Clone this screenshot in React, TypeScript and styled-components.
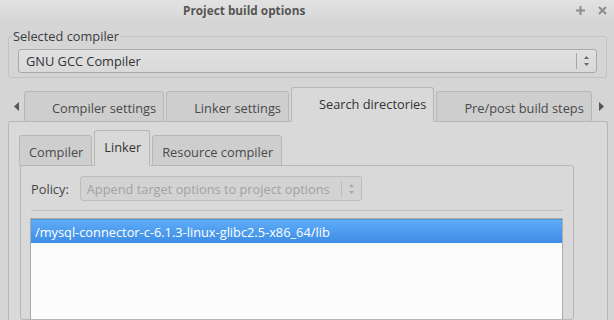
import React from 'react';
import styled, { createGlobalStyle } from 'styled-components';

const GlobalStyle = createGlobalStyle`
  html, body {
    margin: 0;
    padding: 0;
    background: #d5d5d5;
  }
  body {
    font-family: 'Open Sans', 'Noto Sans', sans-serif;
    font-size: 12.8px;
    color: #3c3c3c;
  }
`;

const Window = styled.div`
  width: 614px;
  height: 320px;
  overflow: hidden;
  background: #d5d5d5;
  display: flex;
  flex-direction: column;
`;

const TitleBar = styled.div`
  height: 20px;
  flex: none;
  display: flex;
  align-items: center;
  padding: 0 7px 0 183px;
  background: linear-gradient(#e2e2e2, #d8d8d8);
  .title {
    font-weight: bold;
    font-size: 11.8px;
    color: #555;
    flex: 1;
  }
  .buttons {
    display: flex;
    gap: 13px;
    align-items: center;
  }
`;

const GroupBox = styled.fieldset`
  margin: 7px 7px 0 8px;
  padding: 0 9px 4px;
  border: 1px solid #c2c2c2;
  border-radius: 3px;
  min-width: 0;
  legend {
    padding: 0 1px;
    margin-left: -6px;
    line-height: 18px;
    color: #3c3c3c;
  }
`;

const Combo = styled.div<{ $disabled?: boolean; $width?: number }>`
  box-sizing: border-box;
  height: ${(p) => (p.$disabled ? 25 : 24)}px;
  width: ${(p) => (p.$width ? `${p.$width}px` : 'auto')};
  margin-top: ${(p) => (p.$disabled ? 0 : 4)}px;
  display: flex;
  align-items: center;
  border: 1px solid ${(p) => (p.$disabled ? '#bdbdbd' : '#a9a9a9')};
  border-radius: 3px;
  background: ${(p) => (p.$disabled ? '#d3d3d3' : 'linear-gradient(#e0e0e0, #d9d9d9)')};
  color: ${(p) => (p.$disabled ? '#a2a2a2' : '#333')};
  padding-left: ${(p) => (p.$disabled ? 6 : 7)}px;
  .value {
    flex: 1;
    white-space: nowrap;
  }
  .spin {
    width: 19px;
    height: 16px;
    border-left: 1px solid ${(p) => (p.$disabled ? '#bcbcbc' : '#a6a6a6')};
    display: flex;
    align-items: center;
    justify-content: center;
  }
`;

const TabArea = styled.div`
  margin-top: 9px;
  display: flex;
  flex-direction: column;
  flex: 1;
  min-height: 0;
`;

const TabBar = styled.div`
  display: flex;
  align-items: flex-end;
  height: 35px;
  margin-bottom: -1px;
  position: relative;
  z-index: 1;
`;

const ScrollArrow = styled.div<{ $side: 'left' | 'right' }>`
  width: ${(p) => (p.$side === 'left' ? 24 : 22)}px;
  align-self: stretch;
  display: flex;
  align-items: center;
  justify-content: ${(p) => (p.$side === 'left' ? 'flex-start' : 'flex-end')};
  padding: ${(p) => (p.$side === 'left' ? '0 0 0 14px' : '0 10px 0 0')};
  box-sizing: border-box;
  padding-top: 3px;
`;

const TabRow = styled.div<{ $gap: number }>`
  display: flex;
  align-items: flex-end;
  gap: ${(p) => p.$gap}px;
`;

const Tab = styled.div<{ $active?: boolean; $pad: string; $h: number; $hActive: number }>`
  box-sizing: border-box;
  height: ${(p) => (p.$active ? p.$hActive : p.$h)}px;
  padding: ${(p) => p.$pad};
  display: flex;
  align-items: center;
  white-space: nowrap;
  border: 1px solid #b7b7b7;
  border-bottom-color: ${(p) => (p.$active ? '#d9d9d9' : '#b7b7b7')};
  border-radius: 3px 3px 0 0;
  background: ${(p) => (p.$active ? '#d9d9d9' : '#cecece')};
  color: ${(p) => (p.$active ? '#333' : '#4a4a4a')};
  span {
    position: relative;
    top: ${(p) => (p.$active ? -1 : 1)}px;
  }
`;

const Pane = styled.div<{ $pad: string }>`
  box-sizing: border-box;
  flex: 1;
  border: 1px solid #b7b7b7;
  border-radius: 3px;
  background: #d9d9d9;
  padding: ${(p) => p.$pad};
  display: flex;
  flex-direction: column;
`;

const OuterPane = styled(Pane)`
  margin: 0 6px 0 8px;
  border-bottom: none;
  border-radius: 3px 3px 0 0;
`;

const InnerTabs = styled.div`
  display: flex;
  flex-direction: column;
  flex: 1;
  margin-top: 8px;
`;

const InnerBar = styled(TabBar)`
  height: auto;
  margin-left: -1px;
`;

const PolicyRow = styled.div`
  display: flex;
  align-items: center;
  gap: 11px;
  color: #444;
`;

const Separator = styled.div`
  height: 1px;
  background: #c0c0c0;
  margin: 9px 0 7px;
`;

const ListBox = styled.div`
  flex: 1;
  border: 1px solid #aaaaaa;
  border-bottom: none;
  background: #fcfcfc;
  margin-left: -1px;
`;

const ListRow = styled.div<{ $selected?: boolean }>`
  height: 23px;
  display: flex;
  align-items: center;
  padding-left: 4px;
  color: ${(p) => (p.$selected ? '#fff' : '#333')};
  background: ${(p) => (p.$selected ? 'linear-gradient(#5eabf7, #3d8de6)' : 'transparent')};
  border-top: 1px solid ${(p) => (p.$selected ? '#4f95dc' : 'transparent')};
`;

const SpinIcon = ({ color }: { color: string }) => (
  <svg width="7" height="12" viewBox="0 0 7 12">
    <path d="M3.5 1 L6 4 H1 Z" fill={color} />
    <path d="M3.5 11 L6 8 H1 Z" fill={color} />
  </svg>
);

const Triangle = ({ dir }: { dir: 'left' | 'right' }) => (
  <svg width="5" height="9" viewBox="0 0 5 9">
    {dir === 'left' ? <path d="M5 0 V9 L0 4.5 Z" fill="#555" /> : <path d="M0 0 V9 L5 4.5 Z" fill="#555" />}
  </svg>
);

const mainTabs = ['Compiler settings', 'Linker settings', 'Search directories', 'Pre/post build steps'];
const subTabs = ['Compiler', 'Linker', 'Resource compiler'];
const dirs = ['/mysql-connector-c-6.1.3-linux-glibc2.5-x86_64/lib'];

export default function App() {
  return (
    <>
      <GlobalStyle />
      <Window>
        <TitleBar>
          <span className="title">Project build options</span>
          <span className="buttons">
            <svg width="9" height="9" viewBox="0 0 9 9">
              <path d="M4.5 0 V9 M0 4.5 H9" stroke="#8c8c8c" strokeWidth="2" />
            </svg>
            <svg width="9" height="9" viewBox="0 0 9 9">
              <path d="M1 1 L8 8 M8 1 L1 8" stroke="#8c8c8c" strokeWidth="2" />
            </svg>
          </span>
        </TitleBar>

        <GroupBox>
          <legend>Selected compiler</legend>
          <Combo>
            <span className="value">GNU GCC Compiler</span>
            <span className="spin">
              <SpinIcon color="#6a6a6a" />
            </span>
          </Combo>
        </GroupBox>

        <TabArea>
          <TabBar>
            <ScrollArrow $side="left">
              <Triangle dir="left" />
            </ScrollArrow>
            <TabRow $gap={2}>
              {mainTabs.map((t) => (
                <Tab key={t} $active={t === 'Search directories'} $pad="0 7px 0 27px" $h={31} $hActive={35}>
                  <span>{t}</span>
                </Tab>
              ))}
            </TabRow>
            <ScrollArrow $side="right">
              <Triangle dir="right" />
            </ScrollArrow>
          </TabBar>

          <OuterPane $pad="0 33px 0 11px">
            <InnerTabs>
              <InnerBar>
                <TabRow $gap={2}>
                  {subTabs.map((t) => (
                    <Tab key={t} $active={t === 'Linker'} $pad="0 8px 0 9px" $h={31} $hActive={36}>
                      <span>{t}</span>
                    </Tab>
                  ))}
                </TabRow>
              </InnerBar>
              <Pane $pad="10px 10px 0 10px">
                <PolicyRow>
                  <span>Policy:</span>
                  <Combo $disabled $width={282}>
                    <span className="value">Append target options to project options</span>
                    <span className="spin">
                      <SpinIcon color="#a8a8a8" />
                    </span>
                  </Combo>
                </PolicyRow>
                <Separator />
                <ListBox>
                  {dirs.map((d) => (
                    <ListRow key={d} $selected>
                      {d}
                    </ListRow>
                  ))}
                </ListBox>
              </Pane>
            </InnerTabs>
          </OuterPane>
        </TabArea>
      </Window>
    </>
  );
}
